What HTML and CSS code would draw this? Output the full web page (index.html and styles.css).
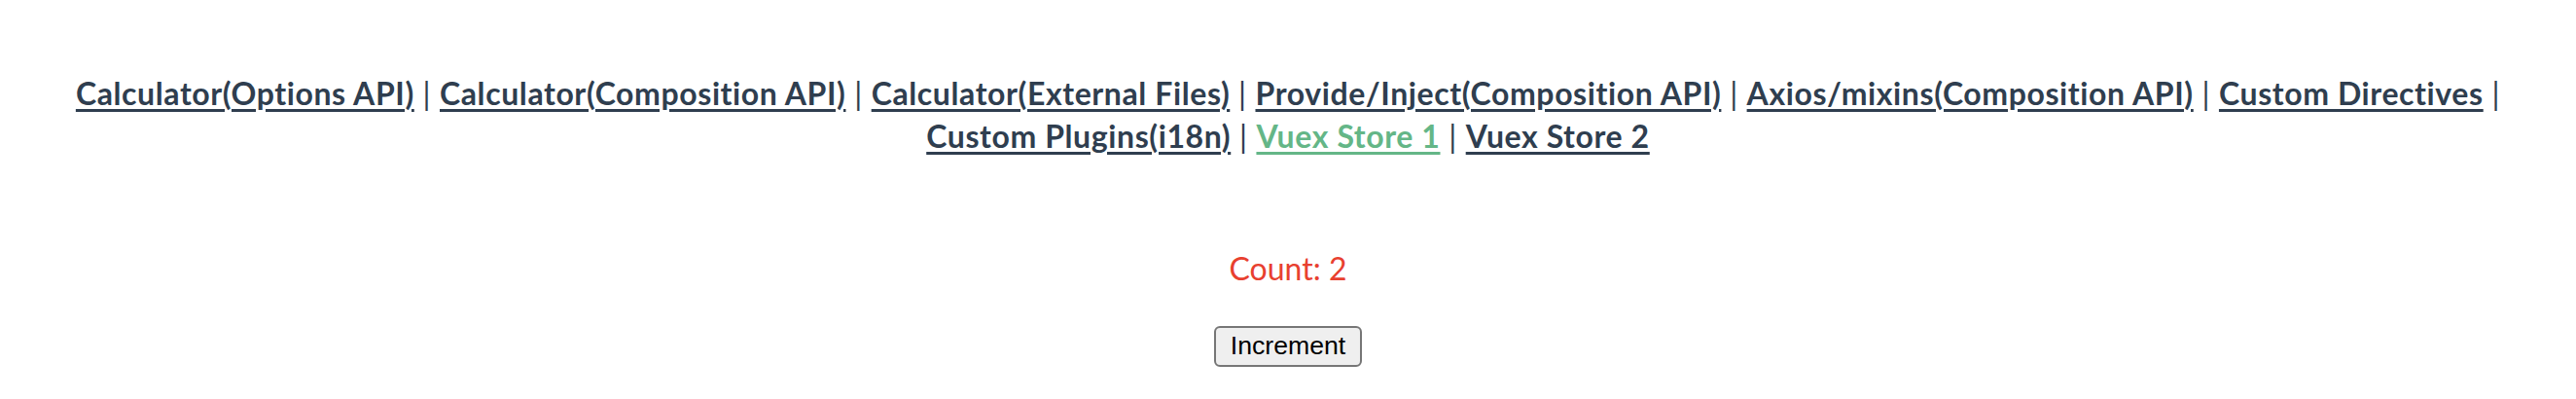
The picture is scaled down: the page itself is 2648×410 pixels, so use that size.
FILE: index.html
```html
<!DOCTYPE html>
<html lang="en">
<head>
<meta charset="utf-8">
<title>Vuex Store 1</title>
<link rel="stylesheet" href="styles.css">
</head>
<body>
<div class="app">
  <nav class="nav">
    <a href="#" class="nav-link">Calculator(Options API)</a>&nbsp;|
    <a href="#" class="nav-link">Calculator(Composition API)</a>&nbsp;|
    <a href="#" class="nav-link">Calculator(External Files)</a>&nbsp;|
    <a href="#" class="nav-link">Provide/Inject(Composition API)</a>&nbsp;|
    <a href="#" class="nav-link">Axios/mixins(Composition API)</a>&nbsp;|
    <a href="#" class="nav-link">Custom Directives</a>&nbsp;|
    <a href="#" class="nav-link">Custom Plugins(i18n)</a>&nbsp;|
    <a href="#" class="nav-link active">Vuex Store 1</a>&nbsp;|
    <a href="#" class="nav-link">Vuex Store 2</a>
  </nav>
  <div class="store">
    <p class="count">Count: 2</p>
    <div class="actions">
      <button class="btn" type="button">Increment</button>
    </div>
  </div>
</div>
</body>
</html>
```
FILE: styles.css
```css
body {
  margin: 16px;
  background: #ffffff;
}

.app {
  font-family: Lato, "Noto Sans", Helvetica, Arial, sans-serif;
  font-size: 32px;
  line-height: 44px;
  text-align: center;
  color: #2f3e4f;
}

.nav {
  padding: 58px 60px 60px;
  letter-spacing: 0.6px;
}

.nav-link {
  font-weight: bold;
  color: #2f3e4f;
  text-decoration: underline;
  text-decoration-thickness: 3px;
  text-underline-offset: 4px;
}

.nav-link.active {
  color: #64b687;
}

.count {
  margin: 32px 0;
  color: #e8402f;
}

.actions {
  line-height: 44px;
}

.btn {
  font-family: "Liberation Sans", Arial, sans-serif;
  font-size: 26.67px;
  color: #000;
  background: #efefef;
  border: 2px solid #767676;
  border-radius: 6px;
  padding: 2px 15px;
  height: 42px;
  vertical-align: middle;
}
```
